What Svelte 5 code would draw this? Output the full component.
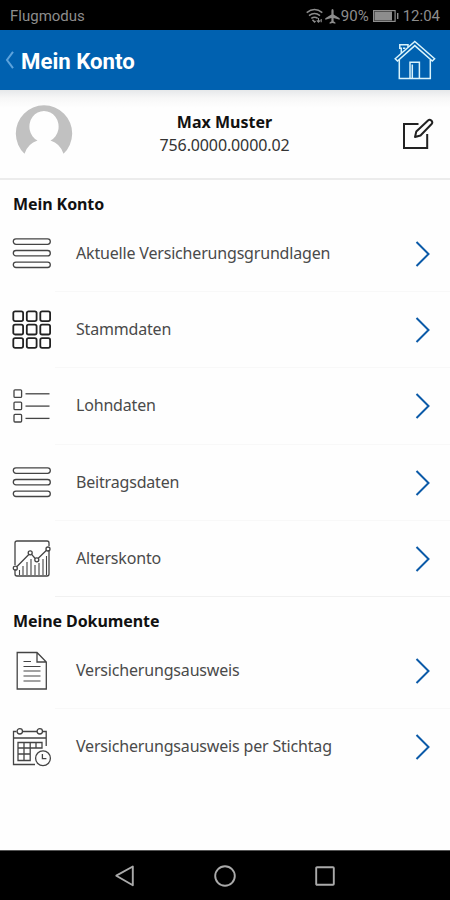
<script lang="ts">
  type IconName = 'bars' | 'grid' | 'list' | 'chart' | 'document' | 'calendar'
  type Section = { title: string; items: { label: string; icon: IconName }[] }

  const user = { name: 'Max Muster', ahv: '756.0000.0000.02' }

  const sections: Section[] = [
    {
      title: 'Mein Konto',
      items: [
        { label: 'Aktuelle Versicherungsgrundlagen', icon: 'bars' },
        { label: 'Stammdaten', icon: 'grid' },
        { label: 'Lohndaten', icon: 'list' },
        { label: 'Beitragsdaten', icon: 'bars' },
        { label: 'Alterskonto', icon: 'chart' },
      ],
    },
    {
      title: 'Meine Dokumente',
      items: [
        { label: 'Versicherungsausweis', icon: 'document' },
        { label: 'Versicherungsausweis per Stichtag', icon: 'calendar' },
      ],
    },
  ]

  const steps = [0, 1, 2]
</script>

{#snippet rowIcon(name: IconName)}
  <svg class="row-icon" width="40" height="40" viewBox="0 0 40 40" aria-hidden="true">
    {#if name === 'bars'}
      {#each steps as i}
        <rect x="1.3" y={4.9 + i * 11.6} width="37" height="5.4" rx="2.7" />
      {/each}
    {:else if name === 'grid'}
      {#each steps as row}
        {#each steps as col}
          <rect class="bold" x={1.3 + col * 13.5} y={1.3 + row * 13.4} width="9.8" height="9.8" rx="1.8" />
        {/each}
      {/each}
    {:else if name === 'list'}
      {#each steps as i}
        <rect x="2" y={3.8 + i * 12.3} width="7.6" height="7.6" rx="1" />
        <path d="M13.5 {7.8 + i * 12.3}H37.5" />
      {/each}
    {:else if name === 'chart'}
      <path d="M3 26V4q0-2 2-2H35q2 0 2 2v3M3 30v5q0 2 2 2H35q2 0 2-2V11" />
      <path d="M5 27.5 16.8 15.5M19.6 15.3l3.6 4.2M26 19.5l8.5-8.2" />
      <circle cx="3.3" cy="29.2" r="2" />
      <circle cx="18.2" cy="13.8" r="2" />
      <circle cx="24.8" cy="20.8" r="2" />
      <circle cx="36" cy="10" r="2" />
      <path class="thin" d="M7.5 36v-5M11 36V27M15 36V23M19 36V20M23 36V26M27 36V24M31 36V20M34.5 36V17" />
    {:else if name === 'document'}
      <path d="M5.2 1.5H25L34.3 11V38H5.2ZM25 1.5V11h9.3" />
      <path class="thin" d="M11.5 10.5h7.5M11.5 15.5h17M11.5 20h17M11.5 25h17M11.5 30h17" />
    {:else}
      <path d="M4.5 4.5h-3V37.5H23M11 4.5H25M31 4.5h3.2V19M1.5 11H34" />
      <circle cx="7.8" cy="4.3" r="2.7" />
      <circle cx="27.8" cy="4.3" r="2.7" />
      <path d="M6 15.5H30v5.5H18.2v12.5H6ZM6 21H18.2M6 27H18.2M12 15.5v18M18.2 15.5V21M24 15.5V21" />
      <circle cx="31" cy="31.3" r="7.4" />
      <path d="M30.4 27v4.6h4" />
    {/if}
  </svg>
{/snippet}

<div class="screen">
  <div class="status-bar">
    <span>Flugmodus</span>
    <div class="status-right">
      <svg width="17" height="16" viewBox="0 0 17 16" fill="none" stroke="currentColor" stroke-width="1.5" aria-hidden="true">
        <path d="M.7 4.7Q8.5-1.6 16.3 4.7M3 7.6q5.5-4.3 11 0M5.3 10.4q3.2-2.4 6.4 0" />
        <path d="M6.5 11.8 8.5 14l1-1" />
        <path d="M12.5 10v4M10.8 12.3l1.7 1.8 1.7-1.8M15.2 14.2V11" stroke-width="1.1" />
      </svg>
      <svg class="plane" width="15" height="15" viewBox="0 0 15 15" fill="currentColor" aria-hidden="true">
        <path d="M7.5 0q1.1 0 1.1 1.8v3.7l6.1 3.7v1.5L8.6 8.9v3.3l1.8 1.4v1.2l-2.9-.8-2.9.8v-1.2l1.8-1.4V8.9L.3 10.7V9.2l6.1-3.7V1.8Q6.4 0 7.5 0Z" />
      </svg>
      <span>90%</span>
      <svg class="battery" width="26" height="12" viewBox="0 0 26 12" aria-hidden="true">
        <rect x=".6" y=".6" width="21.5" height="10.8" fill="none" stroke="currentColor" stroke-width="1.2" />
        <path d="M1.5 1.5h17.5v9H1.5Z" fill="currentColor" />
        <path d="M24.7 3v6" stroke="currentColor" stroke-width="1.4" />
      </svg>
      <span>12:04</span>
    </div>
  </div>

  <header class="app-bar">
    <button class="back" type="button" aria-label="Zurück">
      <svg width="10" height="18" viewBox="0 0 10 18" fill="none" aria-hidden="true">
        <path d="M8 .8 2 9l6 8.2" stroke="#5da3dc" stroke-width="2" />
      </svg>
    </button>
    <h1>Mein Konto</h1>
    <button class="home" type="button" aria-label="Startseite">
      <svg width="42" height="40" viewBox="0 0 42 40" fill="none" stroke="#d9f3fb" stroke-width="1.5" aria-hidden="true">
        <path d="M1.2 18.8 20.8 1.5 40.6 18.8 38.3 21 20.8 5.6 3.5 21Z" />
        <path d="M5.3 20V38.4H36.3V20M16 38V22.3h9.4V38M18.3 38V24.5" />
        <path d="M7.3 13V8.3H5.8V4.8h8.2v2.4M9 8.3h2.3" />
      </svg>
    </button>
  </header>

  <section class="profile">
    <svg class="avatar" width="58" height="58" viewBox="0 0 58 58" aria-hidden="true">
      <path d="M9.5 48.8A28.2 28.2 0 1 1 48.5 48.8Q45 38.5 35.5 35.6A14.6 15.6 0 1 0 22.5 35.6Q13 38.5 9.5 48.8Z" fill="#c1c1c1" />
    </svg>
    <div class="identity">
      <strong>{user.name}</strong>
      <span>{user.ahv}</span>
    </div>
    <button class="edit" type="button" aria-label="Bearbeiten">
      <svg width="32" height="32" viewBox="0 0 32 32" fill="none" stroke="#222" stroke-width="2" aria-hidden="true">
        <path d="M16.5 6H2V30H25.2V16" />
        <path d="M26 2.5q1.6-1.5 3.3 0 1.8 1.8.3 3.5L18.5 17.5 13 19l1.3-5.4Z" stroke-linejoin="round" />
      </svg>
    </button>
  </section>

  <main>
    {#each sections as section}
      <h2>{section.title}</h2>
      <ul>
        {#each section.items as item}
          <li>
            {@render rowIcon(item.icon)}
            <span class="label">{item.label}</span>
            <svg class="chevron" width="16" height="26" viewBox="0 0 16 26" fill="none" aria-hidden="true">
              <path d="M1.5 1 13.5 13 1.5 25" stroke="#0b5aa8" stroke-width="2" />
            </svg>
          </li>
        {/each}
      </ul>
    {/each}
  </main>

  <nav class="nav-bar">
    <svg width="22" height="22" viewBox="0 0 22 22" aria-hidden="true">
      <path d="M2.3 10.7 18.8 1.5V20.3Z" />
    </svg>
    <svg width="22" height="22" viewBox="0 0 22 22" aria-hidden="true">
      <circle cx="11" cy="11" r="9.8" />
    </svg>
    <svg width="22" height="22" viewBox="0 0 22 22" aria-hidden="true">
      <rect x="2.2" y="2.2" width="17.6" height="17.6" rx=".8" />
    </svg>
  </nav>
</div>

<style>
  :global(body) {
    background: #fff;
  }

  .screen {
    display: flex;
    flex-direction: column;
    width: 450px;
    height: 900px;
    overflow: hidden;
    background: #fefefe;
    font-family: 'Noto Sans', 'Open Sans', sans-serif;
    color: #111;
  }

  .status-bar {
    display: flex;
    align-items: center;
    justify-content: space-between;
    box-sizing: border-box;
    height: 30px;
    padding: 2px 10px 0 10px;
    background: #000;
    color: #8d8d8d;
    font: 15px/20px Roboto, sans-serif;
    flex-shrink: 0;
  }

  .status-right {
    display: flex;
    align-items: center;
  }
  .plane { margin: 0 1px 0 2px; }
  .battery { margin: 0 4px 0 4px; }

  .app-bar {
    display: flex;
    align-items: center;
    box-sizing: border-box;
    height: 60px;
    padding: 0 14px 0 5px;
    background: #0061b0;
    flex-shrink: 0;
  }

  button {
    display: flex;
    border: none;
    padding: 0;
    background: transparent;
    cursor: pointer;
  }

  h1 {
    flex: 1;
    margin: 2px 0 0 6px;
    color: #fff;
    font: 700 22.2px/30px Roboto, sans-serif;
  }

  .profile {
    display: flex;
    align-items: center;
    justify-content: space-between;
    box-sizing: border-box;
    height: 90px;
    padding: 0 16px 0 15px;
    border-bottom: 2px solid #ececec;
    background: linear-gradient(#e6e8ea, #f7f7f7 8px, #fefefe 18px);
    flex-shrink: 0;
  }

  .identity {
    display: flex;
    flex-direction: column;
    align-items: center;
    margin-right: 26px;
    font-size: 16px;
    line-height: 23px;
  }
  .identity span {
    color: #333;
    letter-spacing: -0.12px;
  }

  h2 {
    margin: 0;
    padding: 12px 13px 0;
    font-size: 16px;
    font-weight: 700;
    line-height: 24px;
    letter-spacing: -0.08px;
  }

  ul {
    margin: 0;
    padding: 0;
    list-style: none;
  }

  li {
    display: flex;
    align-items: center;
    height: 76.2px;
    padding: 0 19px 0 12px;
    box-sizing: border-box;
    background: linear-gradient(#f8f8f8, #f8f8f8) right bottom / 395px 1px no-repeat;
  }
  li:last-child { background: none; }
  ul:first-of-type li:last-child {
    background: linear-gradient(#f1f1f1, #f1f1f1) right bottom / 395px 1px no-repeat;
  }

  .row-icon {
    fill: none;
    stroke: #444;
    stroke-width: 1.3;
    flex-shrink: 0;
  }
  .row-icon .bold {
    stroke: #222;
    stroke-width: 1.8;
  }
  .row-icon .thin { stroke-width: 1.1; }

  .label {
    flex: 1;
    margin-left: 24px;
    padding-bottom: 2px;
    color: #4a4a4a;
    font-size: 16px;
    letter-spacing: -0.18px;
  }

  .nav-bar {
    display: flex;
    align-items: center;
    justify-content: center;
    gap: 78px;
    box-sizing: border-box;
    height: 50px;
    margin-top: auto;
    border-top: 1px solid #555;
    background: #000;
    flex-shrink: 0;
  }
  .nav-bar svg {
    fill: none;
    stroke: #aaa;
    stroke-width: 1.9;
    stroke-linejoin: round;
  }
</style>
